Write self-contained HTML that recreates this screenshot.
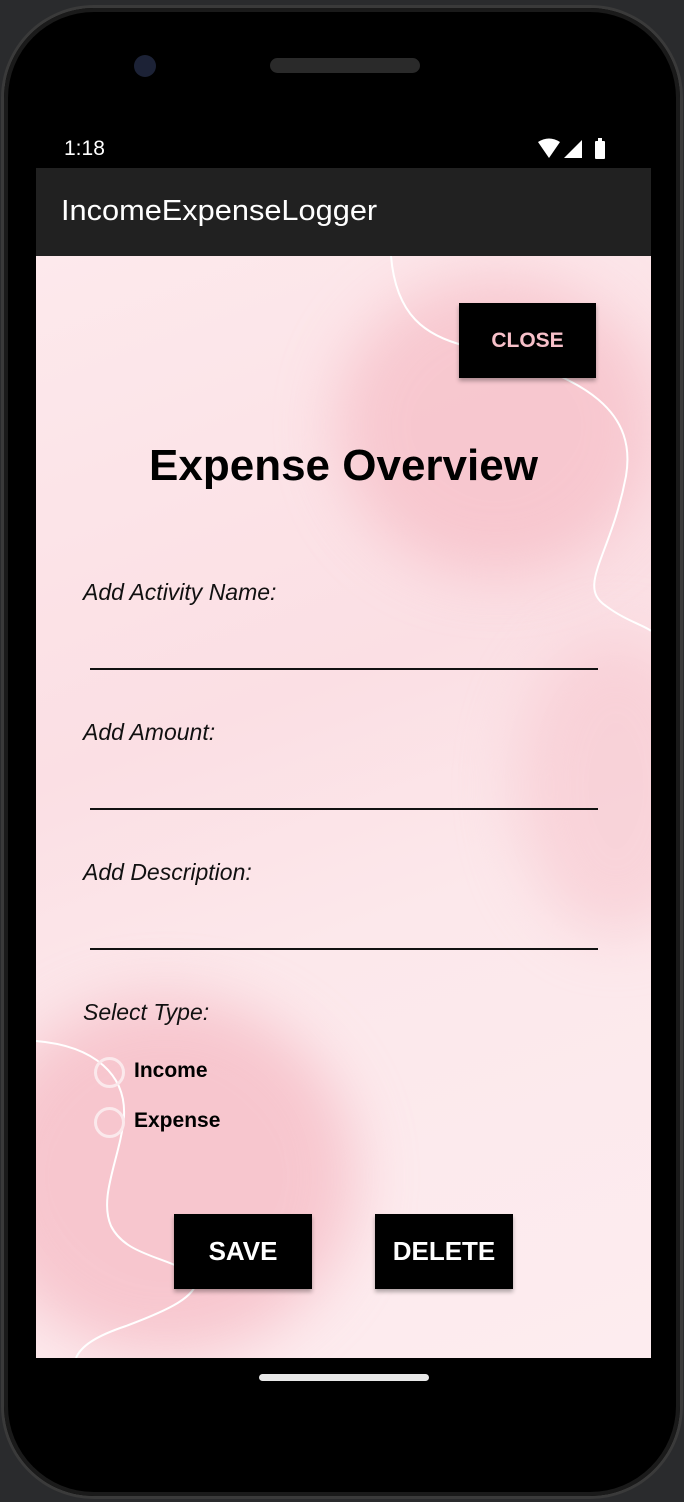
<!DOCTYPE html>
<html><head><style>
html,body{margin:0;width:684px;height:1502px;overflow:hidden}
body{background:#2a2b2d;font-family:"Liberation Sans",sans-serif;position:relative}
.phone{position:absolute;left:4px;top:8px;width:676px;height:1488px;background:#000;border-radius:90px;box-shadow:0 0 0 3px #3a3a3a,inset 0 0 0 4px #1a1a1a}
.abs{position:absolute}
.screen{left:36px;top:256px;width:615px;height:1102px;overflow:hidden;background:linear-gradient(160deg,#fde9ec 0%,#fbdfe4 40%,#fce8eb 60%,#fdecef 100%)}
.blob{position:absolute;border-radius:50%;filter:blur(30px)}
.lbl{position:absolute;left:47px;font-style:italic;font-size:23px;color:#111}
.line{position:absolute;left:54px;width:508px;height:2px;background:#111}
.btn{position:absolute;background:#000;color:#fff;font-weight:bold;display:flex;align-items:center;justify-content:center;box-shadow:0 3px 4px rgba(0,0,0,.3)}
.radio{position:absolute;left:58px;width:25px;height:25px;border:3px solid #fbe9ec;border-radius:50%}
.rl{position:absolute;left:98px;font-weight:bold;font-size:21px;color:#000}
</style></head><body>
<div class="phone"></div>
<div class="abs" style="left:134px;top:55px;width:22px;height:22px;border-radius:50%;background:#1c2236"></div>
<div class="abs" style="left:270px;top:58px;width:150px;height:15px;border-radius:8px;background:#2a2a2a"></div>
<div class="abs" style="left:64px;top:137px;color:#fff;font-size:21px">1:18</div>
<svg class="abs" style="left:538px;top:138px" width="72" height="22"><path d="M0 4 Q11 -3 22 4 L11 20Z" fill="#fff"/><path d="M26 20 L44 20 L44 2Z" fill="#fff"/><rect x="57" y="3" width="10" height="18" rx="1" fill="#fff"/><rect x="60" y="0" width="4" height="3" fill="#fff"/></svg>
<div class="abs" style="left:36px;top:168px;width:615px;height:88px;background:#212121"></div>
<div class="abs" style="left:61px;top:195px;color:#fff;font-size:29px;transform:scaleX(1.06);transform-origin:left">IncomeExpenseLogger</div>
<div class="abs screen">
 <div class="blob" style="left:300px;top:20px;width:320px;height:300px;background:#f5b6c0;opacity:.6"></div>
 <div class="blob" style="left:-60px;top:740px;width:380px;height:360px;background:#f3aab6;opacity:.55"></div>
 <div class="blob" style="left:480px;top:380px;width:200px;height:300px;background:#f6c0c9;opacity:.5"></div>
 <svg class="abs" style="left:0;top:0" width="615" height="1102"><path d="M355 0 C360 60 390 80 430 90 C560 120 600 160 590 220 C575 300 540 330 570 350 C590 365 610 370 615 375" fill="none" stroke="#fff" stroke-width="2"/><path d="M0 785 C60 790 90 820 88 860 C85 900 62 940 75 970 C90 1000 130 1000 160 1020 C165 1040 130 1055 90 1070 C60 1080 45 1090 40 1102" fill="none" stroke="#fff" stroke-width="2"/></svg>
 <div class="btn" style="left:423px;top:47px;width:137px;height:75px;color:#f7c0c9;font-size:21px">CLOSE</div>
 <div class="abs" style="left:0;width:615px;top:185px;text-align:center;font-weight:bold;font-size:44px;color:#000">Expense Overview</div>
 <div class="lbl" style="top:323px">Add Activity Name:</div>
 <div class="line" style="top:412px"></div>
 <div class="lbl" style="top:463px">Add Amount:</div>
 <div class="line" style="top:552px"></div>
 <div class="lbl" style="top:603px">Add Description:</div>
 <div class="line" style="top:692px"></div>
 <div class="lbl" style="top:743px">Select Type:</div>
 <div class="radio" style="top:801px"></div><div class="rl" style="top:803px">Income</div>
 <div class="radio" style="top:851px"></div><div class="rl" style="top:853px">Expense</div>
 <div class="btn" style="left:138px;top:958px;width:138px;height:75px;font-size:26px">SAVE</div>
 <div class="btn" style="left:339px;top:958px;width:138px;height:75px;font-size:26px">DELETE</div>
</div>
<div class="abs" style="left:259px;top:1374px;width:170px;height:7px;border-radius:4px;background:#e8e8e8"></div>
</body></html>
